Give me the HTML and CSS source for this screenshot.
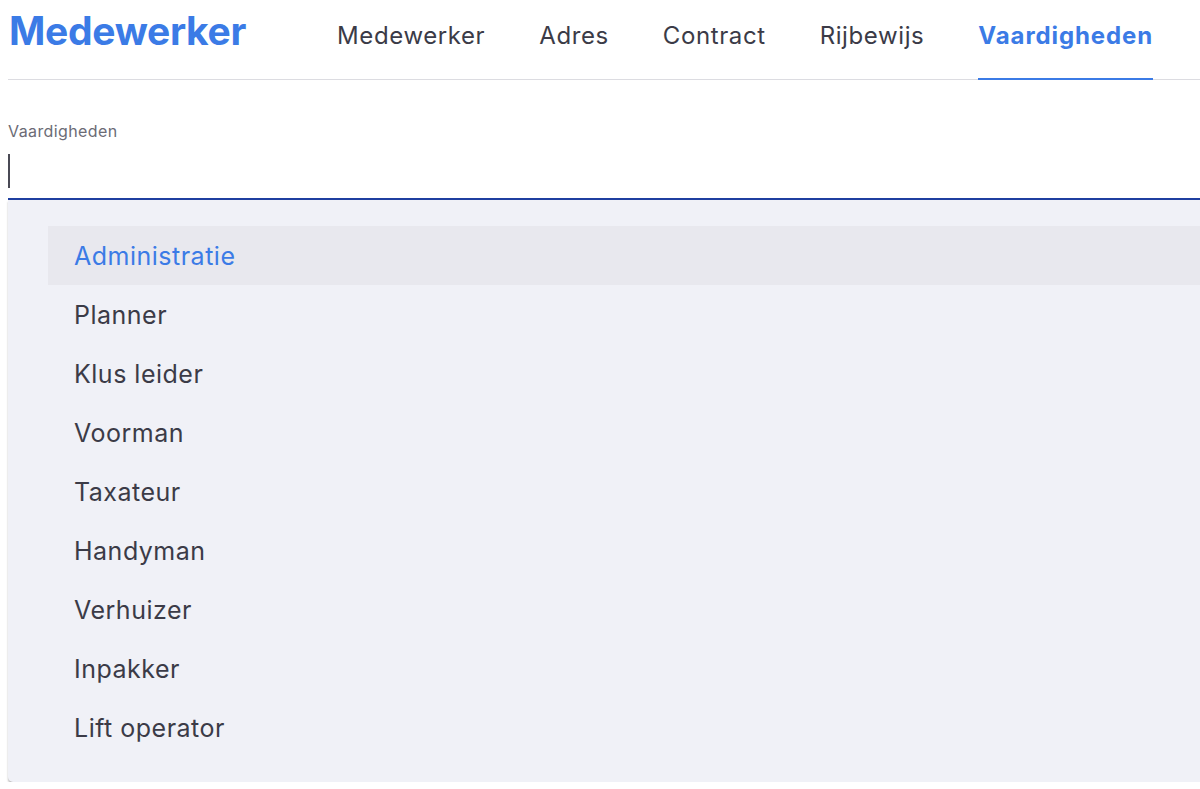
FILE: index.html
```html
<!DOCTYPE html>
<html lang="nl">
<head>
<meta charset="utf-8">
<title>Medewerker</title>
<link rel="stylesheet" href="styles.css">
</head>
<body>
<header class="topbar">
  <h1 class="title">Medewerker</h1>
  <nav class="tabs">
    <a class="tab">Medewerker</a>
    <a class="tab">Adres</a>
    <a class="tab">Contract</a>
    <a class="tab">Rijbewijs</a>
    <a class="tab active">Vaardigheden</a>
  </nav>
</header>
<section class="field">
  <label class="label">Vaardigheden</label>
  <div class="input"><span class="caret"></span></div>
  <ul class="menu">
    <li class="item active">Administratie</li>
    <li class="item">Planner</li>
    <li class="item">Klus leider</li>
    <li class="item">Voorman</li>
    <li class="item">Taxateur</li>
    <li class="item">Handyman</li>
    <li class="item">Verhuizer</li>
    <li class="item">Inpakker</li>
    <li class="item">Lift operator</li>
  </ul>
</section>
</body>
</html>
```
FILE: styles.css
```css
html, body {
  margin: 0;
  padding: 0;
  background: #ffffff;
  overflow: hidden;
}
body {
  padding: 8px 0 0 8px;
  font-family: "Inter", "Noto Sans", sans-serif;
  color: #3b3b47;
}
.topbar {
  display: flex;
  align-items: flex-end;
  height: 71px;
  border-bottom: 1px solid #dcdce1;
}
.title {
  margin: 0 0 0 1px;
  font-size: 39px;
  font-weight: 700;
  color: #3b7be6;
  letter-spacing: -0.3px;
  line-height: 1;
  align-self: flex-start;
  padding-top: 3px;
}
.tabs {
  display: flex;
  gap: 54px;
  margin-left: 91px;
}
.tab {
  display: block;
  font-size: 24px;
  line-height: 1;
  padding: 0 0 30px;
  color: #3b3b47;
  border-bottom: 2px solid transparent;
  margin-bottom: -1px;
  letter-spacing: 0.6px;
}
.tab.active {
  color: #3b7be6;
  font-weight: 700;
  letter-spacing: 0.9px;
  border-bottom-color: #3b7be6;
}
.field {
  padding-top: 42px;
}
.label {
  display: block;
  font-size: 16px;
  line-height: 18px;
  color: #6b6b75;
  letter-spacing: 0.4px;
}
.input {
  height: 58px;
  border-bottom: 2px solid #1f3fa0;
  display: flex;
  align-items: flex-start;
}
.caret {
  display: block;
  width: 2px;
  height: 34px;
  margin-top: 14px;
  background: #4a4a55;
}
.menu {
  list-style: none;
  margin: 0;
  padding: 26px 0 25px 40px;
  background: #f0f1f7;
  border-bottom-left-radius: 5px;
  box-shadow: 0 2px 2px rgba(0, 0, 0, 0.28);
}
.item {
  height: 59px;
  display: flex;
  align-items: center;
  padding-left: 26px;
  font-size: 25px;
  color: #3b3b47;
  letter-spacing: 0.5px;
}
.item.active {
  background: #e8e8ee;
  color: #3b7be6;
}
```
